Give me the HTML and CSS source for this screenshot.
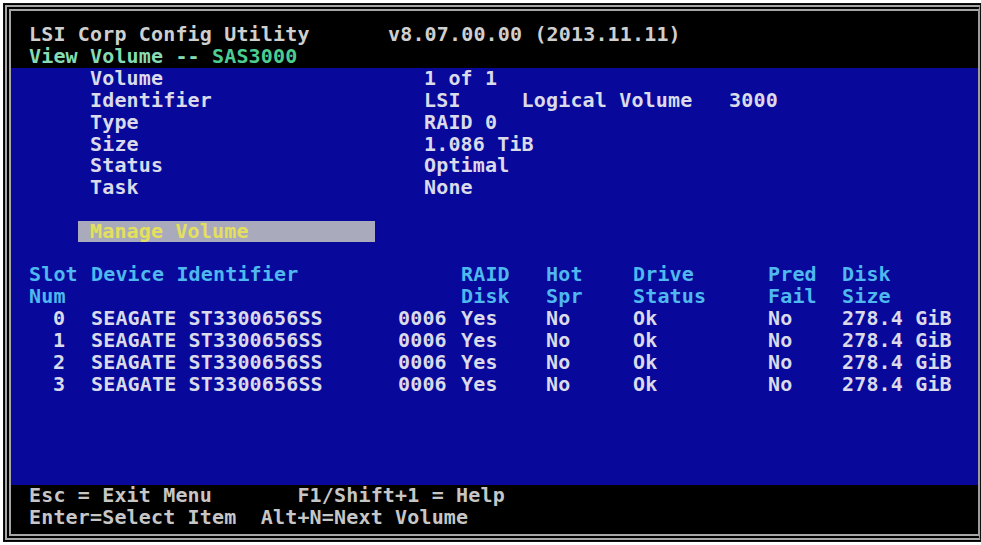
FILE: index.html
```html
<!DOCTYPE html>
<html lang="en">
<head>
  <meta charset="UTF-8" />
  <meta name="viewport" content="width=device-width, initial-scale=1" />
  <title>LSI Corp Config Utility - View Volume</title>
  <link rel="stylesheet" href="styles.css">
</head>
<body>
  <div class="screen">
    <div class="frame">

      <!-- Title bar -->
      <div class="top">
        <div class="title-row">
          <span class="title">LSI Corp Config Utility</span>
          <span class="version">v8.07.00.00 (2013.11.11)</span>
        </div>
        <div class="crumb">View Volume -- <span class="adapter">SAS3000</span></div>
      </div>

      <!-- Main panel -->
      <div class="panel">
        <div class="info">
          <span>Volume</span><span>1 of 1</span>
          <span>Identifier</span><span class="pre">LSI     Logical Volume   3000</span>
          <span>Type</span><span>RAID 0</span>
          <span>Size</span><span>1.086 TiB</span>
          <span>Status</span><span>Optimal</span>
          <span>Task</span><span>None</span>
        </div>

        <div class="menu-item selected">Manage Volume</div>

        <div class="disks">
          <div class="head">Slot</div>
          <div class="head wide">Device Identifier</div>
          <div class="head">RAID</div>
          <div class="head">Hot</div>
          <div class="head">Drive</div>
          <div class="head">Pred</div>
          <div class="head">Disk</div>

          <div class="head">Num</div>
          <div class="wide"></div>
          <div class="head">Disk</div>
          <div class="head">Spr</div>
          <div class="head">Status</div>
          <div class="head">Fail</div>
          <div class="head">Size</div>
        </div>
        <div class="disks" id="diskRows"></div>
      </div>

      <!-- Key help -->
      <div class="bottom">
        <div class="pre">Esc = Exit Menu       F1/Shift+1 = Help</div>
        <div class="pre">Enter=Select Item  Alt+N=Next Volume</div>
      </div>

    </div>
  </div>

  <script>
    const disks = [
      { slot: 0, vendor: 'SEAGATE', model: 'ST3300656SS', rev: '0006' },
      { slot: 1, vendor: 'SEAGATE', model: 'ST3300656SS', rev: '0006' },
      { slot: 2, vendor: 'SEAGATE', model: 'ST3300656SS', rev: '0006' },
      { slot: 3, vendor: 'SEAGATE', model: 'ST3300656SS', rev: '0006' }
    ];

    const rows = document.getElementById('diskRows');
    disks.forEach(d => {
      const cells = [
        ['slot', d.slot],
        ['', d.vendor + ' ' + d.model],
        ['', d.rev],
        ['', 'Yes'],
        ['', 'No'],
        ['', 'Ok'],
        ['', 'No'],
        ['', '278.4 GiB']
      ];
      cells.forEach(([cls, text]) => {
        const cell = document.createElement('div');
        if (cls) cell.className = cls;
        cell.textContent = text;
        rows.appendChild(cell);
      });
    });
  </script>
</body>
</html>
```

FILE: styles.css
```css
body {
  margin: 0;
  background: #fff;
  font-family: 'DejaVu Sans Mono', 'Liberation Mono', monospace;
  font-weight: 700;
  font-size: 20px;
  letter-spacing: 0.16px;
  line-height: 21.9px;
}
.screen {
  margin: 3px 0 3px 3px;
  height: 539px;
  box-sizing: border-box;
  background: #000;
  border: 1px solid #111;
  padding: 1px 0 1px 1px;
}
.frame {
  height: 100%;
  box-sizing: border-box;
  border: 6px double #a6a6a6;
  border-right: 2px solid #9c9c9c;
  display: flex;
  flex-direction: column;
}
.pre {
  white-space: pre;
}
.top {
  padding: 13px 0 0 18px;
  color: #cfcfcf;
}
.title-row {
  display: flex;
}
.title {
  width: 359px;
}
.crumb {
  color: #86dcb2;
}
.adapter {
  color: #4ccd92;
}
.panel {
  flex: 1;
  background: #08099a;
  color: #dadaea;
}
.info {
  display: grid;
  grid-template-columns: 334px 1fr;
  padding-left: 79px;
}
.menu-item {
  margin: 21.9px 0 21.9px 67px;
  width: 297px;
  height: 21px;
  padding-left: 12px;
  box-sizing: border-box;
  line-height: 21px;
}
.selected {
  background: #aaaabd;
  color: #e4e05c;
}
.disks {
  display: grid;
  grid-template-columns: 62px 307px 63px 85px 87px 135px 74px 1fr;
  padding-left: 18px;
}
.disks .wide {
  grid-column: span 2;
}
.head {
  color: #4fb8ee;
}
.slot {
  padding-left: 24px;
}
.bottom {
  padding: 0 0 5px 18px;
  color: #c6c6c6;
}
```
